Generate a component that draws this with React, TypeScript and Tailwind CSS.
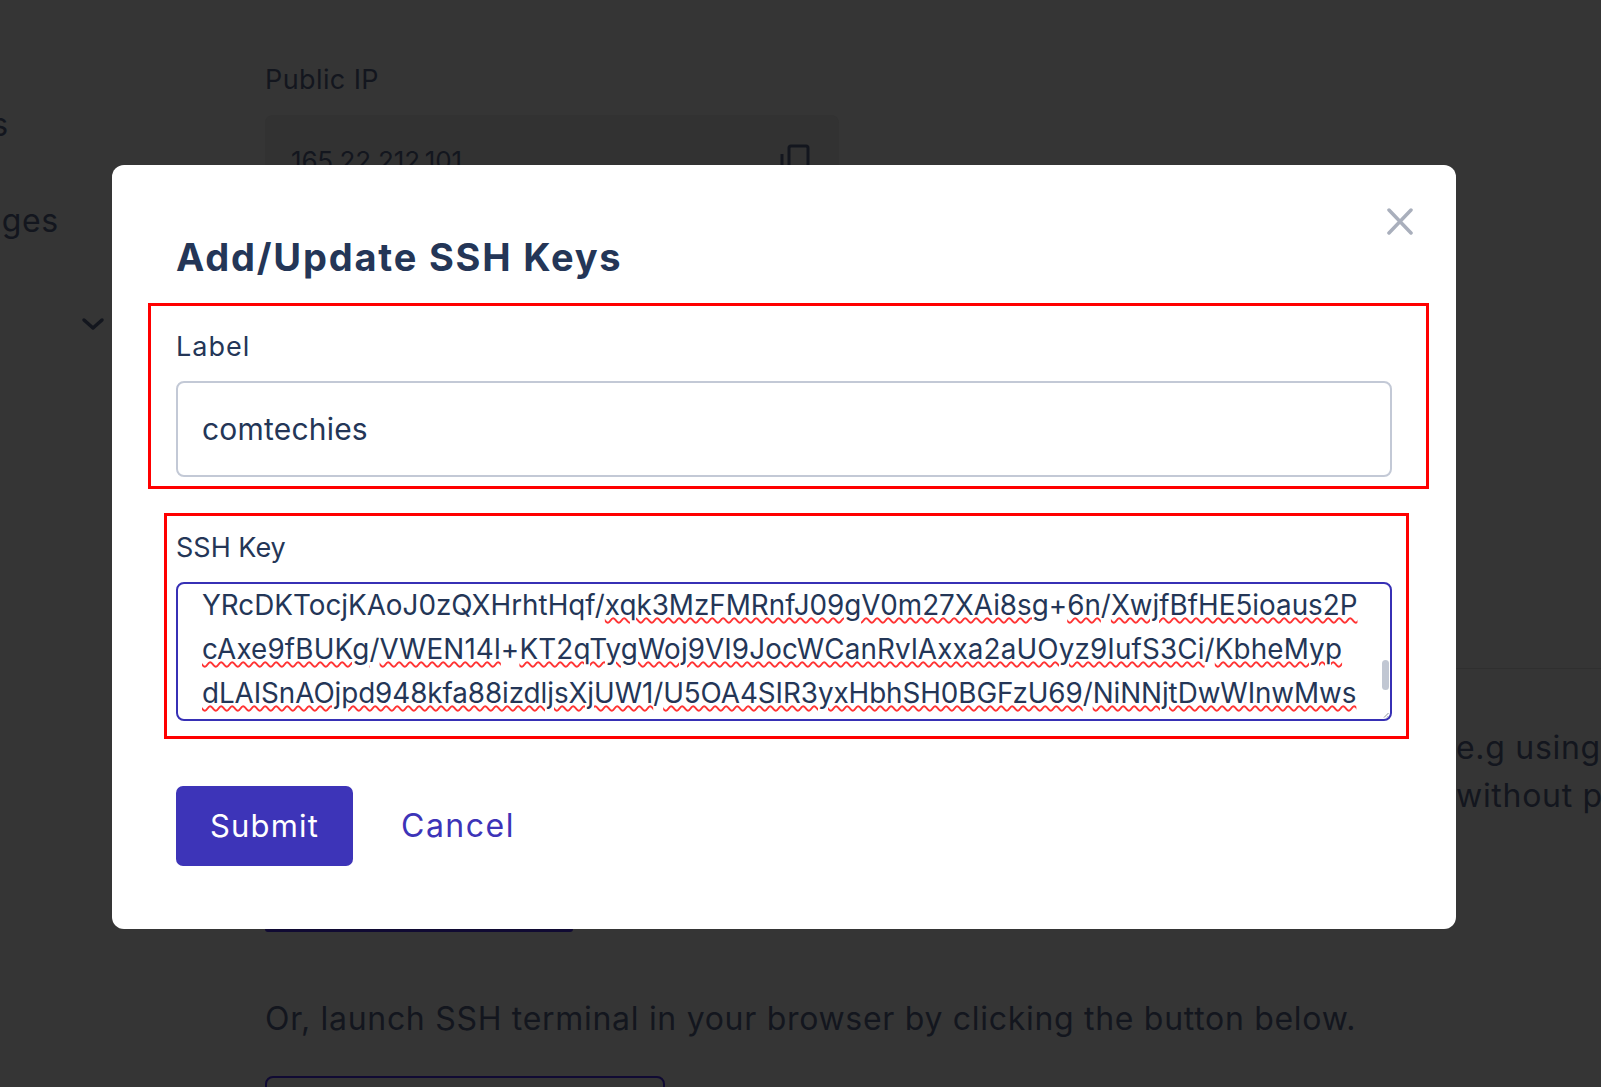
const font = "[font-family:Inter,'Liberation_Sans',sans-serif]";

function Bad({ children }: { children: React.ReactNode }) {
  return (
    <span className="underline decoration-wavy decoration-[#f33] decoration-2 underline-offset-[2px]">
      {children}
    </span>
  );
}

function Background() {
  return (
    <div className="flex h-[1087px] overflow-hidden text-[#13161e]">
      {/* sidebar, cut off on the left */}
      <div className="w-[265px] flex-none">
        <div className="mt-[104px] -ml-[72px] text-[32px] tracking-[.7px] leading-[42px]">Apps</div>
        <div className="mt-[54px] -ml-[55px] text-[32px] tracking-[.7px] leading-[42px]">Images</div>
        <div className="mt-[70px] flex justify-end pr-[160px]">
          <svg width="24" height="24" viewBox="0 0 24 24" fill="none" stroke="currentColor" strokeWidth="3.5" strokeLinecap="round" strokeLinejoin="round">
            <path d="M3 8l9 8 9-8" />
          </svg>
        </div>
      </div>
      <div className="flex-1 min-w-0">
        <div className="mt-[61px] text-[27px] leading-[38px] tracking-[.4px]">Public IP</div>
        <div className="mt-[16px] w-[574px] h-[96px] rounded-lg bg-[#323232] pl-[26px] pr-[29px] pb-[5px] flex items-center justify-between">
          <span className="text-[26px] tracking-[-.2px]">165.22.212.101</span>
          <svg width="30" height="34" viewBox="0 0 30 34" fill="none" stroke="currentColor" strokeWidth="3">
            <path d="M9 26V4a2 2 0 0 1 2-2h15a2 2 0 0 1 2 2v22" />
            <path d="M2 10v20" />
          </svg>
        </div>
        <div className="mt-[457px] h-px bg-[#2f2f2f]" />
        <div className="mt-[55px] ml-[1191px] whitespace-nowrap text-[32px] leading-[48px] tracking-[.7px]">
          <div>e.g using</div>
          <div>without password</div>
        </div>
        <div className="mt-[109px] w-[308px] h-[3px] bg-[#100a33] rounded-b" />
        <div className="mt-[65px] text-[32px] leading-[44px] tracking-[.7px] whitespace-nowrap">
          Or, launch SSH terminal in your browser by clicking the button below.
        </div>
        <div className="mt-[35px] w-[400px] h-[40px] rounded-lg border-2 border-[#100a33]" />
      </div>
    </div>
  );
}

export default function App() {
  return (
    <div className={`relative h-[1087px] overflow-hidden bg-[#353535] ${font}`}>
      <Background />
      {/* modal */}
      <div className="absolute left-[112px] top-[165px] w-[1344px] h-[764px] rounded-xl bg-white px-[64px] text-[#243657]">
        <button className="absolute right-[43px] top-[43px] text-[#a9afbc]">
          <svg width="26" height="27" viewBox="0 0 26 27" fill="none" stroke="currentColor" strokeWidth="3.5" strokeLinecap="round">
            <path d="M2 2l22 23M24 2L2 25" />
          </svg>
        </button>
        <h2 className="pt-[62px] text-[38px] leading-[60px] font-bold tracking-[1.8px]">Add/Update SSH Keys</h2>
        <div className="-ml-[28px] -mr-[37px] mt-[16px] h-[186px] border-[3px] border-[#f00] pl-[25px] pr-[34px]">
          <label className="block mt-[21px] text-[27px] leading-[40px] tracking-[1px]">Label</label>
          <div className="mt-[14px] h-[96px] rounded-lg border-2 border-[#c3c9d6] px-[24px] flex items-center text-[30px] tracking-[.2px]">
            comtechies
          </div>
        </div>
        <div className="-ml-[12px] -mr-[17px] mt-[24px] h-[226px] border-[3px] border-[#f00] pl-[9px] pr-[14px]">
          <label className="block mt-[12px] text-[27px] leading-[40px]">SSH Key</label>
          <div className="relative mt-[14px] h-[139px] rounded-lg border-2 border-[#3730b5] px-[24px] overflow-hidden text-[27.8px] leading-[44px] whitespace-nowrap">
            <div className="-mt-[1px]">
              YRcDKTocjKAoJ0zQXHrhtHqf/<Bad>xqk3MzFMRnfJ09gV0m27XAi8sg</Bad>+<Bad>6n</Bad>/<Bad>XwjfBfHE5ioaus2P</Bad>
            </div>
            <div className="tracking-[.15px]">
              <Bad>cAxe9fBUKg</Bad>/<Bad>VWEN14l</Bad>+<Bad>KT2qTygWoj9VI9JocWCanRvlAxxa2aUOyz9IufS3Ci</Bad>/<Bad>KbheMyp</Bad>
            </div>
            <div className="tracking-[-.07px]">
              <Bad>dLAISnAOjpd948kfa88izdljsXjUW1</Bad>/<Bad>U5OA4SIR3yxHbhSH0BGFzU69</Bad>/<Bad>NiNNjtDwWInwMws</Bad>
            </div>
            {/* scrollbar thumb and resize grip */}
            <div className="absolute right-[1px] top-[76px] w-[7px] h-[30px] rounded bg-[#c1c7d3]" />
            <svg className="absolute right-[1px] bottom-[1px]" width="6" height="6" viewBox="0 0 6 6" stroke="#8a8f99" strokeWidth="1">
              <path d="M1 5.5L5.5 1M4 5.5L5.5 4" />
            </svg>
          </div>
        </div>
        <div className="mt-[47px] flex items-center gap-[48px]">
          <button className="w-[177px] h-[80px] rounded-[7px] bg-[#3d34b8] text-white text-[31px] tracking-[1.2px]">Submit</button>
          <button className="text-[#3d34b8] text-[32px] tracking-[1.5px]">Cancel</button>
        </div>
      </div>
    </div>
  );
}
